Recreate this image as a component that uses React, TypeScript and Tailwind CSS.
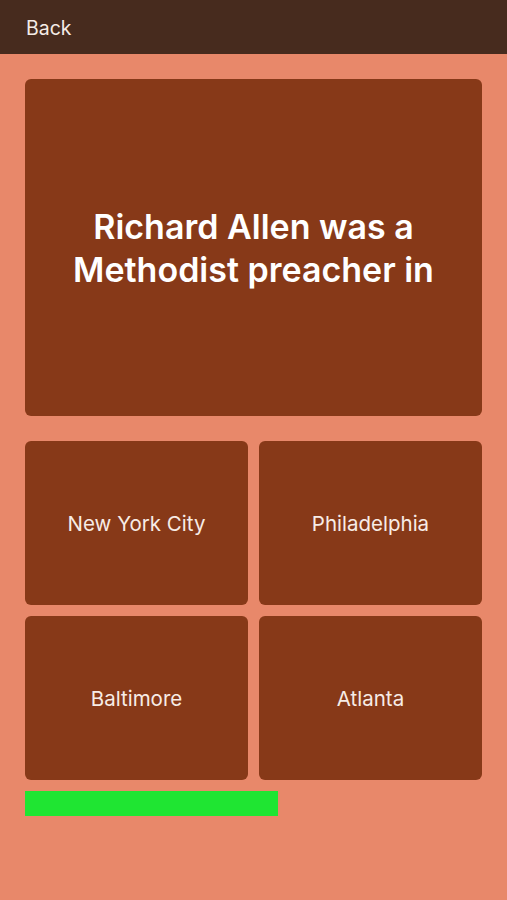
export default function App() {
  const answers = ["New York City", "Philadelphia", "Baltimore", "Atlanta"];

  return (
    <div className="h-[900px] w-full bg-[#e8886a] font-['Inter',sans-serif] flex flex-col">
      <header className="h-[54px] bg-[#472b1e] flex items-center px-[26px] pt-[3px]">
        <span className="text-[19.5px] text-[#f5ece6]">Back</span>
      </header>

      <main className="px-[25px] pt-[25px] flex flex-col">
        <div className="h-[337px] rounded-md bg-[#873918] flex items-center justify-center px-4">
          <h1 className="text-center text-[34px] leading-[43px] font-semibold text-white">
            Richard Allen was a
            <br />
            Methodist preacher in
          </h1>
        </div>

        <div className="mt-[25px] grid grid-cols-2 gap-x-[11px] gap-y-[11px]">
          {answers.map((a) => (
            <button
              key={a}
              className="h-[164px] rounded-md bg-[#873918] flex items-center justify-center pt-[2px] text-[20.5px] text-[#f7ece6]"
            >
              {a}
            </button>
          ))}
        </div>

        <div className="mt-[11px] h-[25px] w-[253px] bg-[#1fe532]" />
      </main>
    </div>
  );
}
